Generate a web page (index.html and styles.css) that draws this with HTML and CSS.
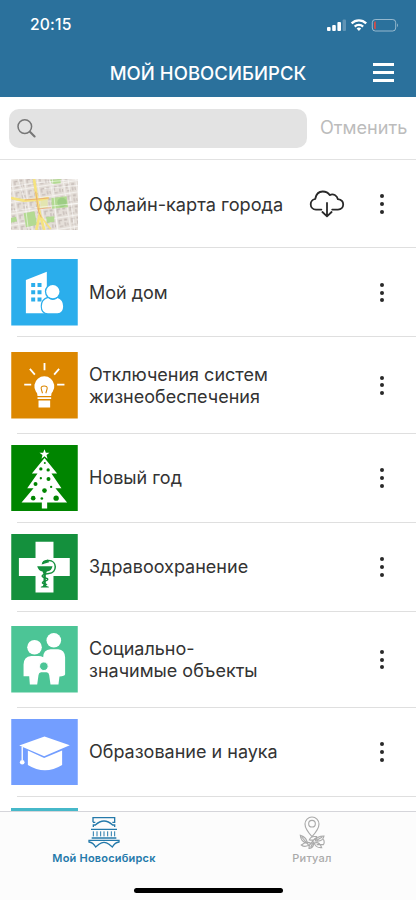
FILE: index.html
```html
<!DOCTYPE html>
<html lang="ru">
<head>
<meta charset="utf-8">
<title>Мой Новосибирск</title>
<link rel="stylesheet" href="styles.css">
</head>
<body>
<div class="app">
<header class="header">
  <div class="status">
    <span class="time">20:15</span>
    <svg class="status-icons" width="72" height="14" viewBox="0 0 72 14">
      <g fill="#fff"><rect x="0" y="9" width="3.6" height="4" rx="1"/><rect x="5.2" y="7" width="3.6" height="6" rx="1"/><rect x="10.4" y="4" width="3.6" height="9" rx="1"/><rect x="15.6" y="1.5" width="3.4" height="11.5" rx="1" opacity=".25"/></g>
      <g fill="none" stroke="#fff" stroke-width="2.3"><path d="M24.6 5.4a10.3 10.3 0 0 1 14.6 0M27.7 8.6a6 6 0 0 1 8.4 0"/></g>
      <path d="M29.6 10.4q2.3-1.7 4.6 0L31.9 12.9z" fill="#fff"/>
      <rect x="45.3" y="1.5" width="23.4" height="11.5" rx="3" fill="none" stroke="#fff" stroke-opacity=".5"/>
      <path d="M48.7 3.3v8q-1.6 0-1.6-1.5v-5q0-1.5 1.6-1.5z" fill="#e8493f"/>
      <path d="M70 5.3q1.9 2 0 4z" fill="#fff" opacity=".5"/>
    </svg>
  </div>
  <div class="titlebar">
    <h1 class="title"><span>МОЙ НОВОСИБИРСК</span></h1>
    <div class="menu"><i></i><i></i><i></i></div>
  </div>
</header>
<div class="search">
  <div class="field"><svg width="20" height="20" viewBox="0 0 20 20" fill="none" stroke="#777" stroke-width="1.5"><circle cx="7.8" cy="7.6" r="6.8"/><path d="M12.9 12.8l4.7 4.6" stroke-width="2.1" stroke-linecap="round"/></svg></div>
  <span class="cancel">Отменить</span>
</div>
<main class="list">
  <div class="row first">
    <svg class="map" viewBox="0 0 201 153" preserveAspectRatio="none">
      <defs><pattern id="blocks" width="38" height="34" patternUnits="userSpaceOnUse" patternTransform="rotate(-9)">
        <rect width="38" height="34" fill="#e5dfd9"/><path d="M0 1h38M1 0v34" stroke="#f3f0ed" stroke-width="3"/><path d="M7 8h11v4h-7v9h-4zM24 7h9v6h-9zM24 18h4v11h-4zM8 26h11v4H8zM32 20h3v8h-3z" fill="#c6bcb7"/></pattern></defs>
      <rect width="201" height="153" fill="url(#blocks)"/>
      <g fill="#b3da92"><path d="M121 57l46-5 4 33-48 4zM38 103l32-6 9 40-34 8zM105 114l25-2v16l-22 3zM117 2l32-2v13l-25 2zM0 117l15-4 3 14-18 4z"/><circle cx="153" cy="70" r="14" fill="#9ccd83"/></g>
      <path d="M88 62h22v25H88z" fill="#e3e5b0"/>
      <g fill="none" stroke="#fff" stroke-width="2" opacity=".8"><path d="M0 23l69-11 132-11M0 96l82-11 119-12M22 0l19 64 11 89M124 0l15 153M171 0l20 153M100 29l101-10"/></g>
      <g fill="none" stroke="#f5e37f" stroke-width="8"><path d="M69 0l10 65 8 42 13 46M0 57l38 8 47-3 28-5M86 107l-10 46"/><path d="M86 108l33 42" stroke-width="5"/></g>
      <g fill="none" stroke="#e5a36f" stroke-width="2.4"><path d="M41 63l39-3 34-3M74 38l9 60 8 18M79 90l42-4"/></g>
    </svg>
    <span class="label"><span>Офлайн-карта города</span></span>
    <svg class="cloud" width="36" height="28" viewBox="0 0 36 28" fill="none" stroke="#292929" stroke-width="1.8" stroke-linecap="round" stroke-linejoin="round"><path d="M12.4 19.6H7C3.8 19.5 1.7 17 1.7 14.2c0-2.7 1.6-4.5 4.5-5.2C7 4.5 9.6 1.5 13.7 1.5c3 0 5.5 1.2 7 3.6 3.6-1.7 7.3.2 8.2 4.1 3.2.4 5.3 2.6 5.3 5.4 0 2.8-2.2 5-5.2 5h-5.8M18 13v13M13.4 22l4.6 4.3 4.6-4.3"/></svg>
    <div class="dots"><i></i><i></i><i></i></div>
  </div>
  <div class="row">
    <svg class="tile" viewBox="0 0 200 200"><path fill="#2baeec" d="M0 0h200v200H0z"/><path fill="#fff" d="M44 63l63-25v125H44z"/><path fill="#2baeec" d="M60 72h12v12H60zm19 0h12v12H79zM60 94h12v12H60zm19 0h12v12H79zM60 116h12v12H60zm19 0h12v12H79z"/><path d="M111 117q14 12 28 0 17 6 17 25 0 21-17 21h-29q-18 0-18-21 0-20 19-25z" fill="#fff" stroke="#2baeec" stroke-width="7" paint-order="stroke"/><circle cx="125" cy="98" r="20" fill="#fff" stroke="#2baeec" stroke-width="8" paint-order="stroke"/></svg>
    <span class="label"><span>Мой дом</span></span><div class="dots"><i></i><i></i><i></i></div>
  </div>
  <div class="row outage">
    <svg class="tile" viewBox="0 0 200 200"><path fill="#dc8700" d="M0 0h200v200H0z"/><path d="M100 33v22M56 51l15 17M144 51l-15 17M39 98h21M138 98h22" stroke="#fff" stroke-width="5.5"/><path d="M79 132q0-9-5-13a30 30 0 1 1 51 0q-5 4-5 13zM79 136h41v5H79zM82 146h35v21H82z" fill="#fff"/><path d="M94 124l-4-14q-1-8 9-8t9 8l-4 14" fill="none" stroke="#dc8700" stroke-width="3.2"/></svg>
    <span class="label"><span>Отключения систем</span><br><span>жизнеобеспечения</span></span><div class="dots"><i></i><i></i><i></i></div>
  </div>
  <div class="row">
    <svg class="tile" viewBox="0 0 200 200"><path fill="#008500" d="M0 0h200v200H0z"/><path d="M100 13l4 10h11l-9 7 3 11-9-7-9 7 3-11-9-7h11zM100 39l38 47h-17l30 44h-18l35 43h-60v18H92v-18H31l36-43H48l31-44H62z" fill="#fff"/><g fill="#008500"><circle cx="101" cy="54" r="3"/><circle cx="89" cy="72" r="5"/><circle cx="111" cy="75" r="5"/><circle cx="89" cy="100" r="3.5"/><circle cx="112" cy="102" r="6"/><circle cx="73" cy="117" r="6"/><circle cx="120" cy="126" r="3.5"/><circle cx="100" cy="137" r="7"/><circle cx="66" cy="160" r="7"/><circle cx="92" cy="161" r="4"/><circle cx="135" cy="160" r="8"/></g></svg>
    <span class="label"><span>Новый год</span></span><div class="dots"><i></i><i></i><i></i></div>
  </div>
  <div class="row">
    <svg class="tile" viewBox="0 0 200 200"><path fill="#14903d" d="M0 0h200v200H0z"/><path fill="#fff" d="M73 23h54v49h49v54h-49v50H73v-50H23V72h50z"/><path fill="#14903d" d="M78 97h46q-2 14-17 16l-3 7v32q0 5 9 7v2H89v-2q8-2 8-7v-32l-3-7q-12-2-16-16z"/><path d="M94 90q5-10 18-10c27 0 27 37 1 39-15 1-24 6-18 10 5 4 18 3 14 9-3 4-14 3-15 8s12 2 13 7" fill="none" stroke="#14903d" stroke-width="4.5"/><path d="M91 92l5-11 14-4 4 8z" fill="#14903d"/></svg>
    <span class="label"><span>Здравоохранение</span></span><div class="dots"><i></i><i></i><i></i></div>
  </div>
  <div class="row social">
    <svg class="tile" viewBox="0 0 200 200"><path fill="#4cc596" d="M0 0h200v200H0z"/><g fill="#fff"><circle cx="70" cy="64" r="22"/><circle cx="128" cy="43" r="22"/><path d="M37 151v-35q0-24 23-26h22q8 0 14 4 0-22 22-24h23q20 2 21 24v51q-1 6-17 7l-3 24h-24l-4-29q-1-8-8-8H90q-7 0-8 8l-4 29H56l-2-25q-16 0-17 0z"/></g><circle cx="98" cy="121" r="13" fill="#4cc596" stroke="#fff" stroke-width="3"/></svg>
    <span class="label"><span>Социально-</span><br><span>значимые объекты</span></span><div class="dots"><i></i><i></i><i></i></div>
  </div>
  <div class="row">
    <svg class="tile" viewBox="0 0 200 200"><path fill="#739eff" d="M0 0h200v200H0z"/><g fill="#fff"><path d="M24 80l76-27 76 26-77 33zM50 95l49 22 54-22v43q-52 32-103 0zM31 84h4v39h-4z"/><circle cx="33" cy="130" r="7"/></g></svg>
    <span class="label"><span>Образование и наука</span></span><div class="dots"><i></i><i></i><i></i></div>
  </div>
  <div class="next"></div>
</main>
<nav class="tabs">
  <div class="tab active">
    <svg width="32" height="33" viewBox="0 0 96 99" fill="none" stroke="currentColor" stroke-width="4"><path d="M15 19V5h65v14h-7M15 19h7M16 33v-6h6q26-24 52 0h6v6M9 40h78M11 66h74M3 73h90v5q-12 1-20 15l-10-8q-15-12-30 0l-10 8Q15 79 3 78z"/><path d="M16 46v15M27 46v15M38 46v15M48 46v15M59 46v15M70 46v15M80 46v15" stroke-width="3"/></svg>
    <span>Мой Новосибирск</span>
  </div>
  <div class="tab">
    <svg class="pin" width="26" height="33" viewBox="0 0 78 99" fill="none" stroke="currentColor" stroke-width="3.4"><path d="M39 62Q18 39 18 24a21 21 0 0 1 42 0q0 15-21 38z"/><circle cx="39" cy="23" r="10"/><path d="M4 58q20 6 21 24Q5 78 4 58zM8 63l22 26 18-22M7 87q17-13 30-4Q19 97 7 87zM31 72q4-13 22-10-3 13-22 10zM49 75q4-15 26-15-3 18-26 15zM30 98q0-19 14-20 2 16-14 20zM46 81q15-5 22 14-19 1-22-14zM53 73l17-10M53 86h20q5-7 0-16M35 93l7-12"/></svg>
    <span>Ритуал</span>
  </div>
  <div class="home"></div>
</nav>
</div>
</body>
</html>
```
FILE: styles.css
```css
* { box-sizing: border-box; }
body { margin: 0; background: #fff; font-family: Inter, "Liberation Sans", sans-serif; }
svg { display: block; flex: none; }
.app { width: 416px; height: 900px; display: flex; flex-direction: column; overflow: hidden; }
.header { height: 97px; flex: none; background: #2b719c; color: #fff; }
.status { height: 48px; padding: 1px 17px 0 30px; display: flex; align-items: center; justify-content: space-between; }
.time { font-size: 15.7px; font-weight: 550; letter-spacing: .15px; }
.titlebar { height: 49px; display: grid; grid-template-columns: 1fr 21px; align-items: center; padding: 0 22px 0 0; }
.title { margin: 0; padding-left: 43px; text-align: center; font-size: 18.5px; line-height: 24px; font-weight: 500; letter-spacing: .05px; white-space: nowrap; }
.menu { display: flex; flex-direction: column; gap: 5px; }
.menu i { height: 2.8px; background: #fff; }
.search { height: 63px; flex: none; display: flex; align-items: center; gap: 13px; padding: 0 0 0 9px; border-bottom: 1px solid #e2e2e2; }
.field { width: 298px; height: 39px; border-radius: 10px; background: #e3e3e3; padding: 10px 8px; }
.cancel { font-size: 18.1px; color: #bcbcbc; white-space: nowrap; padding-bottom: 2px; }
.list { height: 651px; flex: none; overflow: hidden; }
.row { height: 89px; display: flex; align-items: center; padding: 0 28px 0 11px; background: linear-gradient(#dfdfdf, #dfdfdf) 17px 100% / 399px 1px no-repeat; }
.row.first { height: 88px; }
.row.outage { height: 96.5px; }
.row.social { height: 96px; }
.outage .label, .social .label { padding-top: 1px; }
.tile { width: 67px; height: 66.5px; }
.map { width: 67px; height: 51px; }
.label { flex: 1; margin-left: 11px; font-size: 18px; line-height: 22px; color: #333; white-space: nowrap; }
.first .label { font-size: 18.2px; }
.cloud { margin-right: 31px; }
.dots { width: 12px; display: flex; flex-direction: column; align-items: center; gap: 3.7px; }
.dots i { width: 4px; height: 4px; border-radius: 50%; background: #292929; }
.next { width: 67px; height: 67px; margin: 11px 0 0 11px; background: #46b8c9; }
.tabs { height: 89px; flex: none; display: grid; grid-template-columns: 1fr 1fr; grid-template-rows: 76px 5px; border-top: 1px solid #d5d5da; background: #fcfcfc; }
.tab { display: flex; flex-direction: column; align-items: center; padding-top: 4px; color: #aaa; font-size: 11px; font-weight: 500; line-height: 14px; letter-spacing: .2px; gap: 2px; }
.tab.active { color: #2479aa; font-weight: 600; }
.home { grid-column: 1 / 3; justify-self: center; width: 149px; height: 5px; border-radius: 3px; background: #000; }
```
